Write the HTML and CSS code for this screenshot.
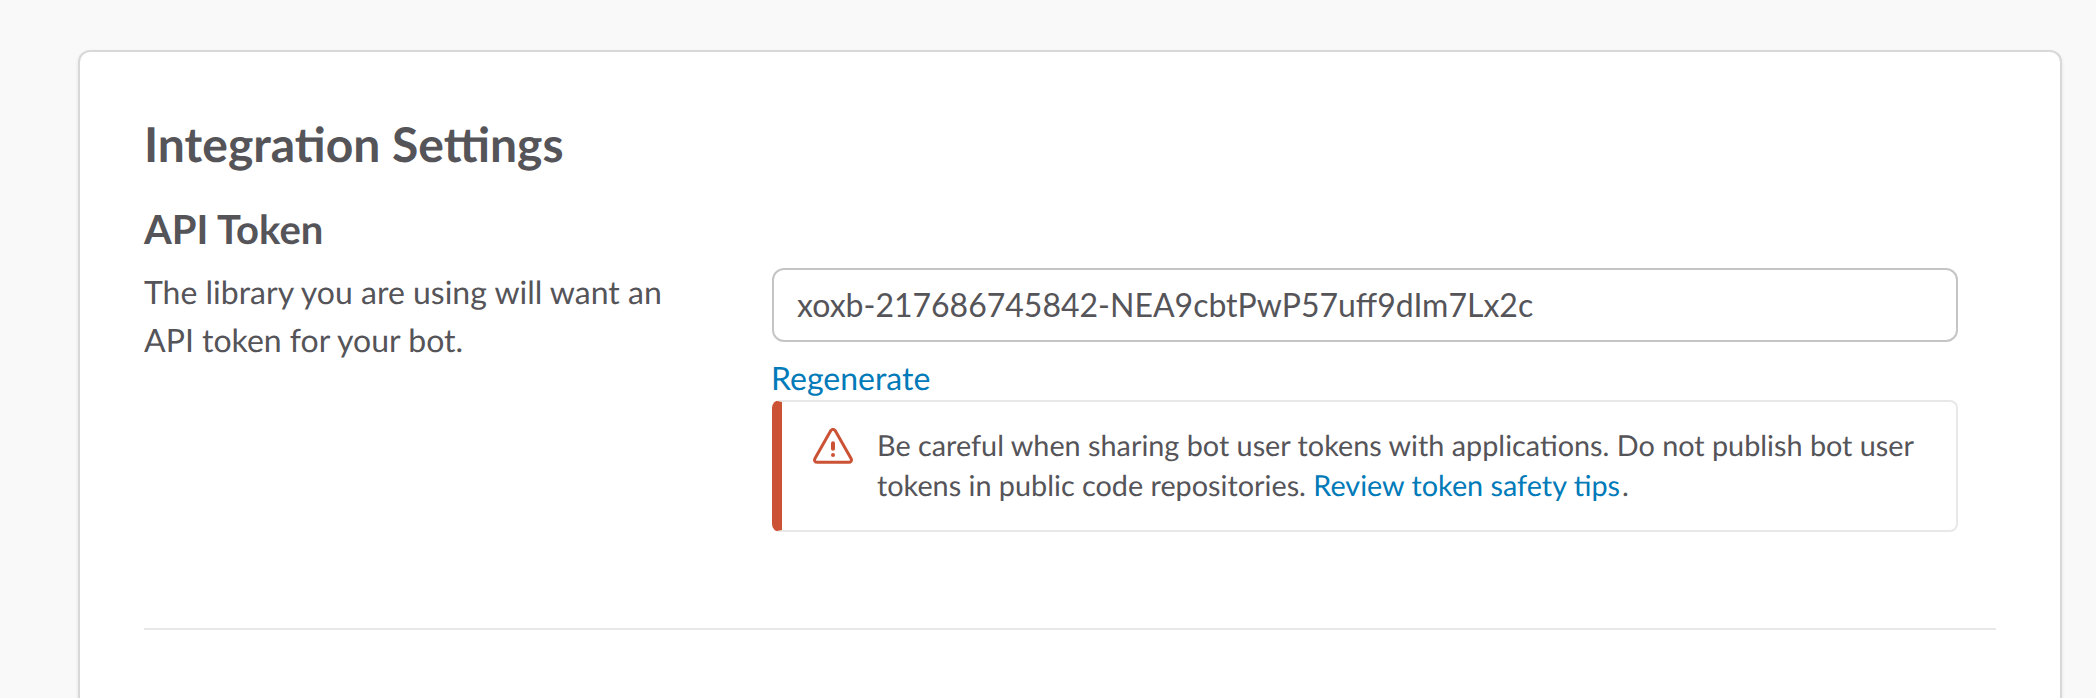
FILE: index.html
```html
<!DOCTYPE html>
<html lang="en">
<head>
<meta charset="utf-8">
<title>Integration Settings</title>
<link rel="stylesheet" href="styles.css">
</head>
<body>
<main class="card">
  <h1 class="title">Integration Settings</h1>
  <section class="setting">
    <h2 class="setting-title">API Token</h2>
    <div class="setting-row">
      <p class="description">The library you are using will want an API token for your bot.</p>
      <div class="field">
        <input class="token" type="text" aria-label="API Token" value="xoxb-217686745842-NEA9cbtPwP57uff9dIm7Lx2c" readonly>
        <a class="link regenerate">Regenerate</a>
        <div class="alert">
          <svg class="alert-icon" viewBox="0 0 40 36" fill="none" stroke="#cb5234" stroke-width="3" stroke-linejoin="round" stroke-linecap="round">
            <path d="M17.7 2.8 2.1 30.2C.8 32.6 2 34.3 4.4 34.3H35.6C38 34.3 39.2 32.6 37.9 30.2L22.3 2.8Q20-.1 17.7 2.8Z"/>
            <path d="M20 15.2V20.8" stroke-width="4"/>
            <circle cx="20" cy="27" r="2" fill="#cb5234" stroke="none"/>
          </svg>
          <p class="alert-text">Be careful when sharing bot user tokens with applications. Do not publish bot user tokens in public code repositories. <a class="link tips">Review token safety tips</a>.</p>
        </div>
      </div>
    </div>
  </section>
</main>
</body>
</html>
```
FILE: styles.css
```css
* { box-sizing: border-box; }
body {
  margin: 0;
  height: 698px;
  overflow: hidden;
  padding: 50px 34px 0 78px;
  background: #f9f9f9;
  color: #555459;
  font-family: Lato, sans-serif;
  font-size: 32px;
  line-height: 48px;
  text-rendering: geometricPrecision;
}
h1, h2, p { margin: 0; }
.card {
  height: 648px;
  padding: 63px 64px 0;
  background: #fff;
  border: 2px solid #d8d8d8;
  border-bottom: 0;
  border-radius: 12px 12px 0 0;
  box-shadow: 0 2px 4px rgba(0, 0, 0, .08);
}
.title { font-size: 48px; line-height: 60px; font-weight: 700; }
.setting {
  height: 455px;
  padding-top: 24px;
  border-bottom: 2px solid #e8e8e8;
}
.setting-title { font-size: 40px; line-height: 60px; font-weight: 700; }
.setting-row {
  display: grid;
  grid-template-columns: 540px 1186px;
  column-gap: 88px;
  padding-top: 9px;
}
.field { display: flex; flex-direction: column; align-items: flex-start; }
.token {
  width: 100%;
  height: 74px;
  padding: 0 23px 2px;
  border: 2px solid #c5c5c5;
  border-radius: 12px;
  outline: none;
  background: #fff;
  color: inherit;
  font: inherit;
}
.link { color: #007ab8; text-decoration: none; }
.regenerate { margin: 13px 0 0 -1px; line-height: 45px; }
.tips { margin-right: 2px; }
.alert {
  display: flex;
  gap: 24px;
  width: 100%;
  height: 132px;
  padding: 24px 24px 0 31px;
  border: 2px solid #e8e8e8;
  border-left: 10px solid #cb5234;
  border-radius: 8px;
}
.alert-icon { flex: none; width: 40px; height: 36px; margin-top: 2px; }
.alert-text { font-size: 28.8px; line-height: 40px; }
```
